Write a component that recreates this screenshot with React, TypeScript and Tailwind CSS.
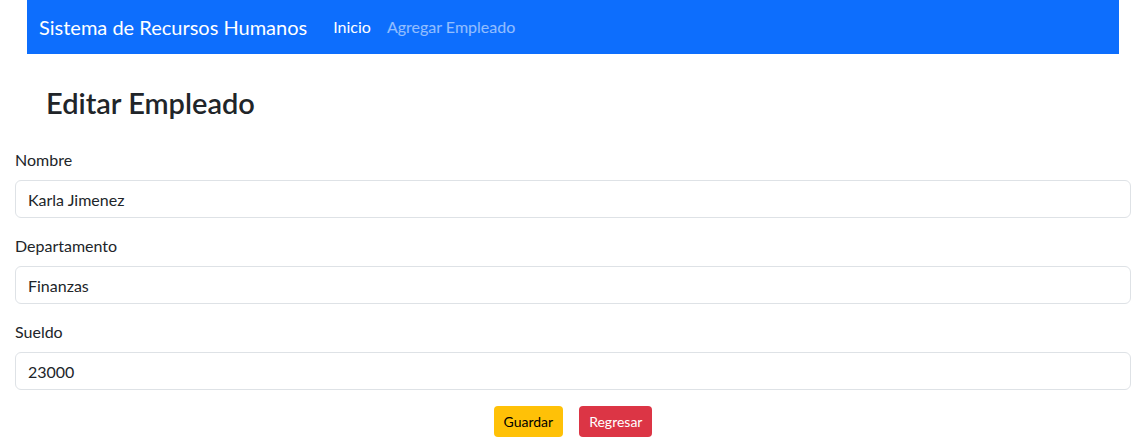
const font = { fontFamily: 'Lato, "Segoe UI", sans-serif' };

function Field({ label, value }: { label: string; value: string }) {
  return (
    <div className="mb-4">
      <label className="mb-2 block text-base leading-6 text-[#212529]">{label}</label>
      <input
        className="block h-[38px] w-[1116px] rounded-md border border-[#dee2e6] bg-white px-3 text-base text-[#212529] outline-none"
        defaultValue={value}
        style={font}
      />
    </div>
  );
}

export default function App() {
  return (
    <div className="min-h-[445px] bg-white text-[#212529]" style={font}>
      {/* navbar */}
      <nav className="ml-[27px] flex h-[54px] w-[1092px] items-center bg-[#0d6efd] px-3">
        <span className="mr-[26px] text-xl text-white">Sistema de Recursos Humanos</span>
        <div className="flex gap-4 text-base">
          <a className="text-white" href="#">Inicio</a>
          <a className="text-white/55" href="#">Agregar Empleado</a>
        </div>
      </nav>

      <div className="pl-[46px] pt-[30px]">
        <h2 className="text-[29px] font-semibold leading-[38px]">Editar Empleado</h2>
      </div>

      <form className="mt-[26px] px-[15px]">
        <Field label="Nombre" value="Karla Jimenez" />
        <Field label="Departamento" value="Finanzas" />
        <Field label="Sueldo" value="23000" />
        <div className="flex justify-center gap-4 pl-2">
          <button type="button" className="h-[31px] rounded bg-[#ffc107] px-[10px] text-sm text-black">
            Guardar
          </button>
          <button type="button" className="h-[31px] rounded bg-[#dc3545] px-[10px] text-sm text-white">
            Regresar
          </button>
        </div>
      </form>
    </div>
  );
}
